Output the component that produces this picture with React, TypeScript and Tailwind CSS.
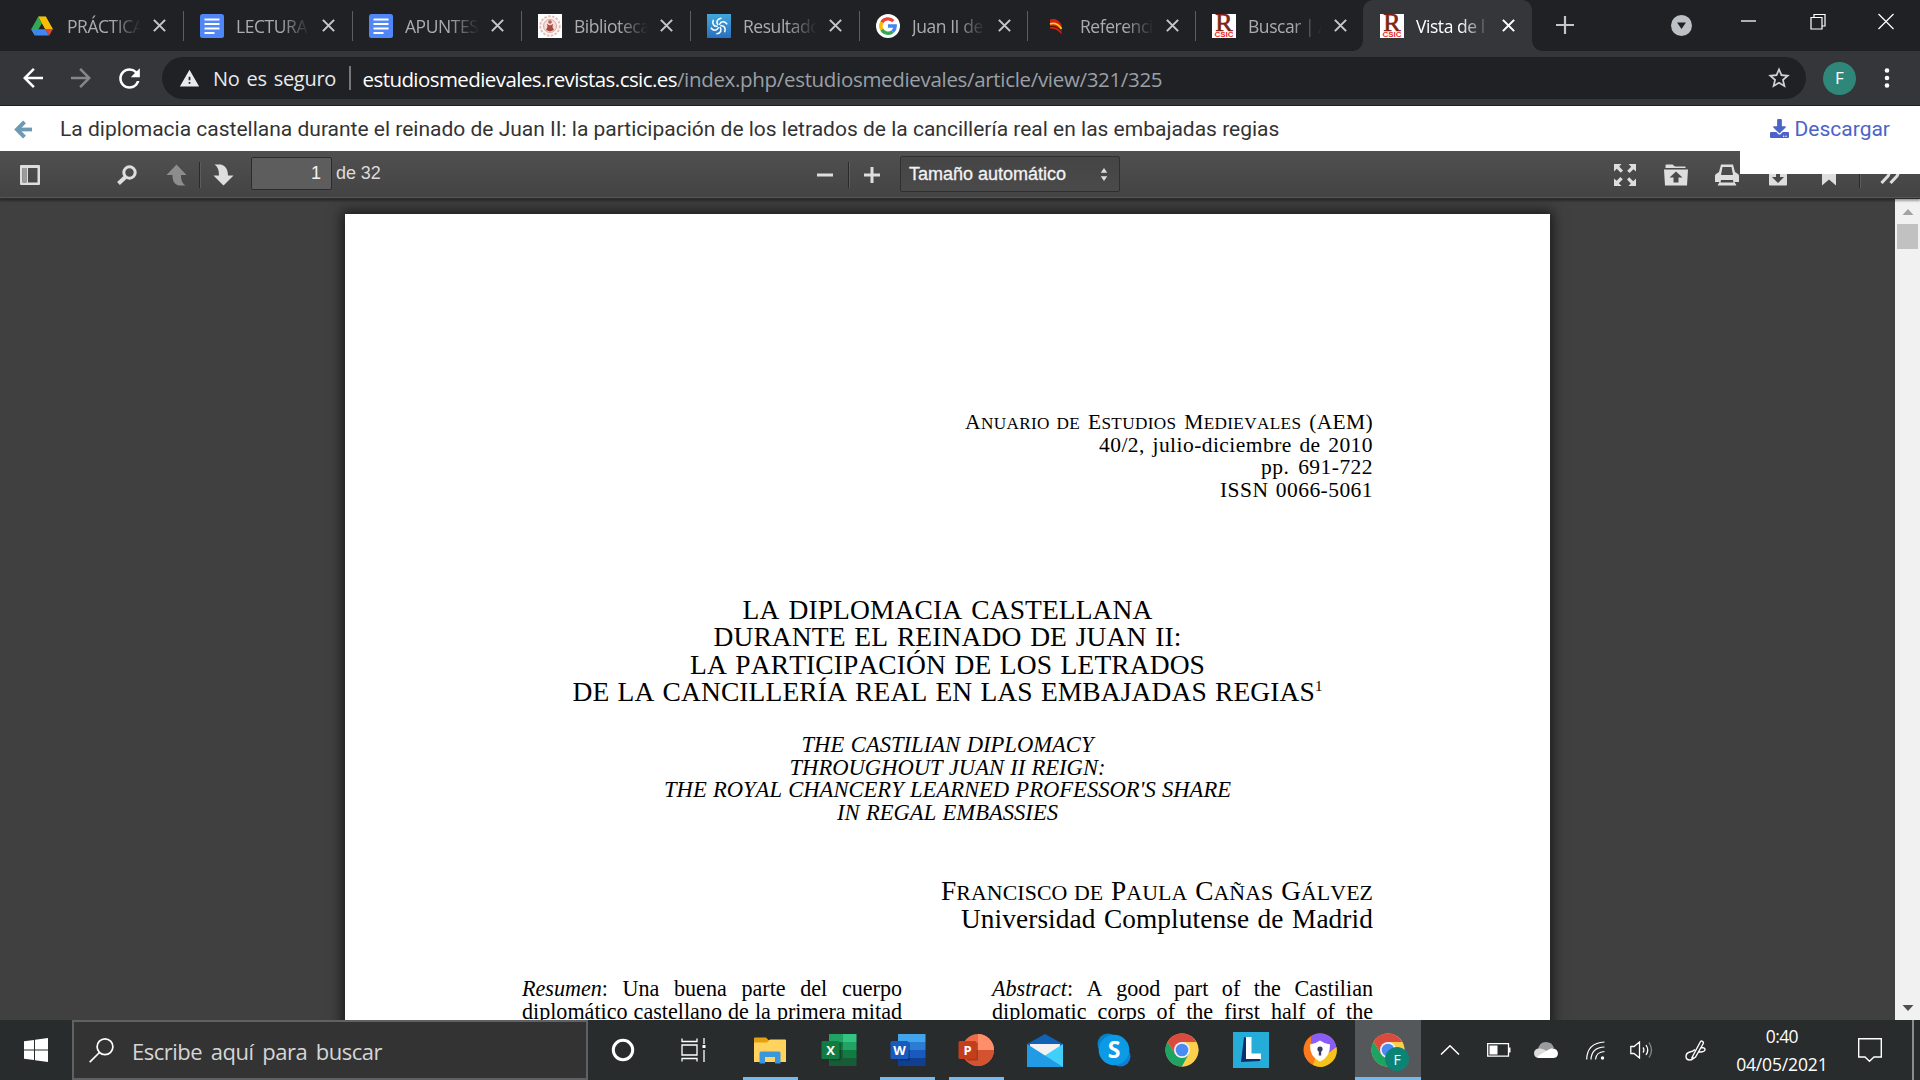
import React from "react";
import { MdArrowBack, MdArrowForward, MdRefresh, MdStarBorder, MdWarning } from "react-icons/md";
import { FaDownload } from "react-icons/fa";

type P = { children?: React.ReactNode };

/* ---------- favicons ---------- */
const Drive = () => (
  <svg viewBox="0 0 22 20" className="mr-[2px] h-5 w-[22px]">
    <path d="M7.3 0.5 H14.7 L11 7.2Z" fill="#188038" />
    <path d="M7.3 0.5 L11 7.2 L3.8 19.5 L0.2 13.2Z" fill="#34a853" />
    <path d="M14.7 0.5 L21.8 13.2 H14.4 L11 7.2Z" fill="#fbbc04" />
    <path d="M7.3 0.5H14.7L21.800 13.200H14.400L11 7.200Z" fill="#fbbc04" />
    <path d="M7.5 13.2 H14.4 L18.2 19.5 H3.8Z" fill="#4285f4" />
    <path d="M14.4 13.2 H21.8 L18.2 19.5Z" fill="#ea4335" />
    <path d="M0.2 13.2 H7.5 L3.8 19.5Z" fill="#4285f4" />
  </svg>
);
const Docs = () => (
  <svg viewBox="0 0 24 24" className="size-6">
    <rect width="24" height="24" rx="2.5" fill="#5087f8" />
    <path d="M4.5 5.5h15M4.5 10h15M4.5 14.5h15M4.5 19h10" stroke="#fff" strokeWidth="2.1" />
  </svg>
);
const Seal = () => (
  <svg viewBox="0 0 24 24" className="size-6">
    <rect width="24" height="24" fill="#fff" />
    <circle cx="12" cy="12" r="9.8" fill="#fbf1ee" stroke="#e3bbb4" strokeWidth="1.800" strokeDasharray="2.500 1.500" />
    <circle cx="12" cy="12" r="6.5" fill="#f3dcd8" stroke="#dbaaa2" />
    <path d="M9 10l3 1.500 3-1.500-.5 3 1.500 3-4 1.500-4-1.500 1.500-3z" fill="#a8453d" />
    <circle cx="12" cy="8" r="1.8" fill="#b8605a" />
  </svg>
);
const Swirl = () => (
  <svg viewBox="0 0 24 24" className="size-6">
    <defs>
      <linearGradient id="sw" x1="0" y1="0" x2="0" y2="1">
        <stop offset="0" stopColor="#41a8dc" />
        <stop offset="1" stopColor="#2a6fc0" />
      </linearGradient>
    </defs>
    <rect width="24" height="24" fill="url(#sw)" />
    <g fill="none" stroke="#fff" strokeWidth="1.500" strokeLinecap="round">
      {[0, 60, 120, 180, 240, 300].map((a) => (
        <path key={a} d="M10.800 10.500C9 8 10.200 4.800 14 4.200" transform={`rotate(${a} 12 12)`} />
      ))}
    </g>
  </svg>
);
const Google = () => (
  <svg viewBox="0 0 24 24" className="size-6">
    <circle cx="12" cy="12" r="12" fill="#fff" />
    <g fill="none" strokeWidth="3.4">
      <path d="M17.3 7.2A7.2 7.2 0 0 0 5.8 8.4" stroke="#ea4335" />
      <path d="M5.8 8.4a7.2 7.2 0 0 0 0 7.2" stroke="#fbbc05" />
      <path d="M5.8 15.6A7.2 7.2 0 0 0 16.8 17.4" stroke="#34a853" />
      <path d="M16.8 17.4A7.2 7.2 0 0 0 19.2 12H12" stroke="#4285f4" />
    </g>
  </svg>
);
const Flag = () => (
  <svg viewBox="0 0 24 24" className="size-6">
    <path d="M6 5.500Q13 3 17.500 10.500v10Q13 14 6 14.500z" fill="#d51f10" />
    <path d="M6 9.800q7-2 11.500 5" fill="none" stroke="#ffd21c" strokeWidth="1.800" />
    <path d="M6 12.500q7-1 11.500 5" fill="none" stroke="#3c0f0a" strokeWidth="1" />
  </svg>
);
const Csic = () => (
  <span className="flex h-6 w-6 flex-col items-center overflow-hidden bg-white">
    <span className="h-[18px] font-['Liberation_Serif',serif] text-[26px] leading-[18px] text-[#7e2415] [-webkit-text-stroke:0.600px]">R</span>
    <span className="h-[6px] font-['Liberation_Sans',sans-serif] text-[8px] leading-[6px] font-bold text-[#ee2d1d]">CSIC</span>
  </span>
);

const tabs = [
  { t: "PRÁCTICA", icon: <Drive /> },
  { t: "LECTURA", icon: <Docs /> },
  { t: "APUNTES", icon: <Docs /> },
  { t: "Biblioteca", icon: <Seal /> },
  { t: "Resultado", icon: <Swirl /> },
  { t: "Juan II de", icon: <Google /> },
  { t: "Referencia", icon: <Flag /> },
  { t: "Buscar | A", icon: <Csic /> },
  { t: "Vista de l", icon: <Csic />, active: true },
];

function TabStrip() {
  return (
    <div className="flex h-[51px] items-stretch bg-[#202124] pl-[14px]">
      {tabs.map((tab, i) => (
        <div
          key={i}
          className={
            "relative flex shrink-0 items-center pl-[17px] " +
            (i < 5 || tab.active ? "w-[169px] " : "w-[168px] ") +
            (tab.active ? "rounded-t-[10px] bg-[#35363a] text-white" : "text-[#a9adb2]")
          }
        >
          {tab.active && (
            <>
              <span className="absolute bottom-0 -left-[10px] size-[10px] bg-[radial-gradient(circle_at_0_0,#202124_9.500px,#35363a_10px)]" />
              <span className="absolute -right-[10px] bottom-0 size-[10px] bg-[radial-gradient(circle_at_100%_0,#202124_9.500px,#35363a_10px)]" />
            </>
          )}
          <span className="flex w-6 justify-center">{tab.icon}</span>
          <span className="ml-3 w-[74px] overflow-hidden text-[17.500px] leading-6 tracking-[-0.450px] whitespace-nowrap [mask-image:linear-gradient(to_right,#000_60%,transparent)]">
            {tab.t}
          </span>
          <svg viewBox="0 0 12 12" className={"ml-[12px] size-[13px] shrink-0 " + (tab.active ? "text-white" : "text-[#c3c6ca]")}>
            <path d="M0.800 0.800 11.200 11.200M11.200 0.800 0.800 11.200" stroke="currentColor" strokeWidth="1.900" />
          </svg>
          {i < 7 && <span className="absolute top-[11px] -right-px h-[30px] w-[1.500px] bg-[#5b5d60]" />}
        </div>
      ))}
      <svg viewBox="0 0 18 18" className="mt-4 ml-[24px] size-[18px]">
        <path d="M9 0v18M0 9h18" stroke="#c3c6ca" strokeWidth="2.200" />
      </svg>
      <svg viewBox="0 0 21 21" className="mt-[14.500px] ml-[97px] size-[21px]">
        <circle cx="10.500" cy="10.500" r="10.500" fill="#bdc1c6" />
        <path d="M6 7.500h9l-4.500 6.500z" fill="#202124" />
      </svg>
      <div className="mt-[13px] ml-[49px] flex h-[17px] w-[153px] items-center justify-between">
        <svg viewBox="0 0 16 17" className="h-[17px] w-4"><path d="M0 8h15" stroke="#fff" strokeWidth="1.300" /></svg>
        <svg viewBox="0 0 16 17" className="h-[17px] w-4" fill="none" stroke="#fff" strokeWidth="1.200">
          <path d="M1 4.500h11v11.500H1zM4 4.500v-3h11v11.500h-3" />
        </svg>
        <svg viewBox="0 0 16 17" className="h-[17px] w-4" stroke="#fff" strokeWidth="1.200">
          <path d="M0.500 1l15 15M15.500 1l-15 15" />
        </svg>
      </div>
    </div>
  );
}

function AddressRow() {
  return (
    <div className="flex h-[55px] items-center border-b border-[#202124] bg-[#35363a]">
      <MdArrowBack className="ml-[18px] size-[30px] text-white" />
      <MdArrowForward className="ml-[18px] size-[30px] text-[#85878b]" />
      <MdRefresh className="ml-[18px] size-[31px] text-white" />
      <div className="ml-[17px] flex h-[42px] w-[1644px] items-center rounded-full bg-[#202124]">
        <MdWarning className="ml-[17px] size-[21px] text-[#e8eaed]" />
        <span className="mt-px ml-[13px] w-[123px] text-[20px] leading-7 tracking-[-0.300px] whitespace-nowrap text-[#e8eaed] [text-align-last:justify]">No es seguro</span>
        <span className="ml-[13px] h-6 w-[1.500px] bg-[#75777a]" />
        <span className="mt-px ml-[12px] text-[20.500px] leading-7 whitespace-nowrap">
          <span className="tracking-[-0.570px] text-white">estudiosmedievales.revistas.csic.es</span>
          <span className="tracking-[-0.320px] text-[#9aa0a6]">/index.php/estudiosmedievales/article/view/321/325</span>
        </span>
        <MdStarBorder className="mr-[14px] ml-auto size-[26px] text-[#d0d2d5]" />
      </div>
      <span className="ml-[17px] flex size-[33px] items-center justify-center rounded-full bg-[#2f877a] text-[17px] text-white">F</span>
      <svg viewBox="0 0 6 20" className="ml-[28px] h-5 w-[6px] shrink-0" fill="#fff">
        <circle cx="3" cy="2.500" r="2.300" /><circle cx="3" cy="10" r="2.300" /><circle cx="3" cy="17.500" r="2.300" />
      </svg>
    </div>
  );
}

/* ---------- pdf viewer toolbar ---------- */
const Sep = () => <span className="h-[26px] w-[2px] border-l border-l-[#2a2a2a] bg-[#5c5c5c]" />;

function PdfToolbar() {
  return (
    <div className="relative z-10 flex h-12 items-center border-b border-[#2c2c2c] bg-linear-to-b from-[#505050] to-[#434343] font-['Liberation_Sans',sans-serif] text-[#dcdcdc] shadow-[0_2px_2px_rgba(0,0,0,0.350),inset_0_-1px_0_#565656]">
      <svg viewBox="0 0 22 22" className="ml-[19px] size-[22px]">
        <path fillRule="evenodd" d="M2 1h18q1 0 1 1v18q0 1-1 1H2q-1 0-1-1V2q0-1 1-1zM3.500 4v14.500h4V4zM9 4v14.500h9.500V4z" fill="#dedede" />
        <path d="M4 4h3.500v14.500H4z" fill="#9c9c9c" />
      </svg>
      <svg viewBox="0 0 21 20" className="ml-[76px] h-5 w-[21px]" fill="none" stroke="#dedede">
        <circle cx="12.500" cy="7.500" r="5.700" strokeWidth="3" />
        <path d="M8.500 12L1.500 18.500" strokeWidth="4" />
      </svg>
      <svg viewBox="0 0 21 22" className="ml-[28px] h-[22px] w-[21px]">
        <path d="M10.500 0.500L20.500 11H15C15 16 16 19 19.500 21.500H12.500C8 20 6.500 17 6.500 11H0.500Z" fill="#8d8d8d" />
      </svg>
      <span className="ml-[12px] flex"><Sep /></span>
      <svg viewBox="0 0 21 22" className="ml-[12px] h-[22px] w-[21px]">
        <path d="M10.500 21.500L20.500 11.500H15C15 6 13 2 8 0.500H1.500C5 3 6 6 6 11.500H0.500Z" fill="#dedede" />
      </svg>
      <span className="mb-[3px] ml-[17px] flex h-[33px] w-[81px] items-center justify-end rounded-[2px] border border-[#2b2b2b] bg-[#5d5d5d] pr-[10px] text-[18px] text-[#f2f2f2]">1</span>
      <span className="mb-[3px] ml-[4px] w-[46px] text-[18px] tracking-[-0.100px] whitespace-nowrap">de 32</span>
      <svg viewBox="0 0 16 16" className="ml-[435px] size-4"><path d="M0 8h16" stroke="#dedede" strokeWidth="3" /></svg>
      <span className="ml-[15px] flex"><Sep /></span>
      <svg viewBox="0 0 16 16" className="ml-[14px] size-4"><path d="M0 8h16M8 0v16" stroke="#dedede" strokeWidth="3" /></svg>
      <span className="mb-[1px] ml-[20px] flex h-9 w-[220px] items-center rounded-[2px] border border-[#2f2f2f] bg-linear-to-b from-[#454545] to-[#4a4a4a] pl-[8px] text-[18px] text-[#f2f2f2]">
        <span className="w-[157px] whitespace-nowrap [-webkit-text-stroke:0.300px] [text-align-last:justify]">Tamaño automático</span>
        <svg viewBox="0 0 8 14" className="ml-[34px] h-[13px] w-2" fill="#dedede"><path d="M4 0l3.500 5h-7zM4 14l3.500-5h-7z" /></svg>
      </span>
      <svg viewBox="0 0 22 22" className="ml-[494px] size-[22px]" fill="#dedede">
        {[0, 90, 180, 270].map((a) => (
          <path key={a} d="M0 0h7.500L5.200 2.600 9 6.400 6.800 8.800 2.800 4.800 0 7.500z" transform={`rotate(${a} 11 11)`} />
        ))}
      </svg>
      <svg viewBox="0 0 24 22" className="ml-[28px] h-[22px] w-6">
        <path d="M1.500 4V1.500q0-1 1-1h6l2.500 2h10.500v1.500z" fill="#dedede" />
        <path fillRule="evenodd" d="M0 5.500h24L23 21.500H1zM12 7.500l-6.500 6h4v5h5v-5h4z" fill="#dedede" />
      </svg>
      <svg viewBox="0 0 24 22" className="ml-[27px] h-[22px] w-6">
        <path fillRule="evenodd" d="M6 0.500h12l2 7.500 3 2q1 .5 1 2v6h-4.500l2 3.500H2.500l2-3.500H0v-6q0-1.500 1-2l3-2zM7.500 3L6 11h12L16.500 3zM6 16l-.5 2.500h13L18 16z" fill="#dedede" />
      </svg>
      <svg viewBox="0 0 18 22" className="ml-[30px] h-[22px] w-[18px]">
        <path fillRule="evenodd" d="M1 1h16q1 0 1 1v18.500q0 1-1 1H1q-1 0-1-1V2q0-1 1-1zM7 5v8H3l6 6 6-6h-4V5z" fill="#dedede" />
      </svg>
      <svg viewBox="0 0 14 22" className="ml-[35px] h-[22px] w-[14px]"><path d="M0 1h14v20.500l-7-6-7 6z" fill="#dedede" /></svg>
      <span className="ml-[23px] flex"><Sep /></span>
      <svg viewBox="0 0 22 18" className="ml-[19px] h-[18px] w-[22px]" fill="none" stroke="#dedede" strokeWidth="3">
        <path d="M6 0Q11 6 8 10L1.500 17M14 0Q20 6 17 10L10.500 17" />
      </svg>
      <span className="absolute top-0 right-0 h-[23px] w-[180px] bg-white" />
    </div>
  );
}

/* ---------- document ---------- */
const J = ({ children, className = "" }: P & { className?: string }) => (
  <div className={"whitespace-nowrap [text-align-last:justify] " + className}>{children}</div>
);
const Sc = ({ children }: P) => <span className="text-[0.800em] leading-none">{children}</span>;

function Document() {
  return (
    <div className="ml-[345px] h-[1200px] w-[1205px] bg-white pt-[197px] font-['Liberation_Serif',serif] text-black shadow-[0_0_12px_3px_rgba(0,0,0,0.600)] [font-kerning:none]">
      <div className="mr-[177px] flex flex-col items-end text-[21.500px] leading-[22.600px] tracking-[0.450px]">
        <J className="w-[408px] tracking-[0.350px]">A<Sc>NUARIO DE</Sc> E<Sc>STUDIOS</Sc> M<Sc>EDIEVALES</Sc> (AEM)</J>
        <J className="w-[274px]">40/2, julio-diciembre de 2010</J>
        <J className="w-[112px]">pp. 691-722</J>
        <J className="w-[153px]">ISSN 0066-5061</J>
      </div>
      <div className="mt-[94.600px] flex flex-col items-center text-[27.500px] leading-[27.300px] tracking-[0.100px]">
        <J className="w-[410px]">LA DIPLOMACIA CASTELLANA</J>
        <J className="w-[468px]">DURANTE EL REINADO DE JUAN II:</J>
        <J className="w-[515px]">LA PARTICIPACIÓN DE LOS LETRADOS</J>
        <J className="w-[750px]">DE LA CANCILLERÍA REAL EN LAS EMBAJADAS REGIAS<span className="relative -top-[10px] text-[15px] leading-none">1</span></J>
      </div>
      <div className="mt-[29px] flex flex-col items-center text-[22.600px] leading-[22.500px] italic">
        <J className="w-[292px]">THE CASTILIAN DIPLOMACY</J>
        <J className="w-[316px]">THROUGHOUT JUAN II REIGN:</J>
        <J className="w-[567px]">THE ROYAL CHANCERY LEARNED PROFESSOR'S SHARE</J>
        <J className="w-[221px]">IN REGAL EMBASSIES</J>
      </div>
      <div className="mt-[54px] mr-[177px] flex flex-col items-end text-[27.300px] leading-[27.800px] tracking-[0.100px]">
        <J className="w-[432px]">F<Sc>RANCISCO DE</Sc> P<Sc>AULA</Sc> C<Sc>AÑAS</Sc> G<Sc>ÁLVEZ</Sc></J>
        <J className="w-[412px]">Universidad Complutense de Madrid</J>
      </div>
      <div className="mt-[44.400px] mr-[177px] ml-[177px] flex justify-between text-[22.100px] leading-[22.600px]">
        <div className="w-[380px]">
          <J><i>Resumen</i>: Una buena parte del cuerpo</J>
          <J>diplomático castellano de la primera mitad</J>
        </div>
        <div className="w-[381px]">
          <J><i>Abstract</i>: A good part of the Castilian</J>
          <J>diplomatic corps of the first half of the</J>
        </div>
      </div>
    </div>
  );
}

function Viewer() {
  return (
    <div className="flex h-[821px] overflow-hidden bg-[#404040]">
      <div className="w-[1895px] overflow-hidden pt-[15px]"><Document /></div>
      <div className="flex w-[25px] flex-col items-center bg-[#f1f1f1]">
        <svg viewBox="0 0 12 6" className="mt-[10px] h-[6px] w-3"><path d="M6 0l5.500 6h-11z" fill="#a3a3a3" /></svg>
        <span className="mt-[9px] h-[25px] w-[21px] bg-[#c1c1c1]" />
        <svg viewBox="0 0 12 6" className="mt-auto mb-[9px] h-[6px] w-3"><path d="M6 6L.5 0h11z" fill="#505050" /></svg>
      </div>
    </div>
  );
}

/* ---------- taskbar ---------- */
const Office = ({ l, kind }: { l: string; kind: "x" | "w" | "p" }) => {
  const c = { x: ["#33c481", "#21a366", "#107c41", "#185c37"], w: ["#41a5ee", "#2b7cd3", "#185abd", "#103f91"], p: [] as string[] }[kind];
  const box = { x: "#107c41", w: "#185abd", p: "#c43e1c" }[kind];
  return (
    <svg viewBox="0 0 36 32" className="h-8 w-9">
      {kind === "p" ? (
        <>
          <circle cx="20" cy="16" r="16" fill="#ed6c47" />
          <path d="M20 0a16 16 0 0 1 16 16H20z" fill="#ff8f6b" />
          <path d="M4 16h32a16 16 0 0 1-32 0z" fill="#d35230" />
        </>
      ) : (
        <>
          {c.map((f, i) => <rect key={i} x="8" y={i * 8} width="27.500" height="8.200" fill={f} />)}
          {kind === "x" && <><rect x="8" y="0" width="14" height="8" fill="#21a366" /><rect x="8" y="8" width="14" height="8" fill="#107c41" /><rect x="8" y="16" width="14" height="8" fill="#185c37" /></>}
        </>
      )}
      <rect x="9" y="8.500" width="11" height="18" rx="1" fill="#000" opacity=".25" />
      <rect x="0.500" y="7" width="18" height="18" rx="1.600" fill={box} />
      <text x="9.500" y="20.500" textAnchor="middle" fill="#fff" fontSize="13" fontWeight="700" fontFamily="Open Sans">{l}</text>
    </svg>
  );
};

const Chrome = () => (
  <svg viewBox="0 0 34 34" className="size-[34px]">
    <circle cx="17" cy="17" r="16.500" fill="#fcd04b" />
    <path d="M2.700 8.700A16.500 16.500 0 0 0 17 33.500l7-12.500-7-4-7 4z" fill="#1da362" />
    <path d="M17 9h14.300A16.500 16.500 0 0 1 17 33.500l7-12.500z" fill="#fcd04b" />
    <path d="M2.700 8.700L10 21l7-12h14.300A16.500 16.500 0 0 0 2.700 8.700z" fill="#db4a3f" />
    <circle cx="17" cy="17" r="8" fill="#f1f1f1" />
    <circle cx="17" cy="17" r="6.300" fill="#4a8af4" />
  </svg>
);

const Slot = ({ children, open, active }: P & { open?: boolean; active?: boolean }) => (
  <div className="relative flex h-full w-[68.700px] shrink-0 items-center justify-center">
    {active && <span className="absolute inset-y-0 right-[2px] left-px bg-[#54585a]" />}
    <span className="relative flex">{children}</span>
    {open && <span className={"absolute bottom-0 h-[3px] bg-[#76b9ed] " + (active ? "right-[2px] left-px" : "inset-x-[7px]")} />}
  </div>
);

function Taskbar() {
  return (
    <div className="flex h-[60px] items-center bg-[#282c2d]">
      <svg viewBox="0 0 24 24" className="ml-6 size-6" fill="#fff">
        <path d="M0 3.300L10 2v9.500H0zM11 1.800L24 0v11.500H11zM0 12.500h10V22L0 20.700zM11 12.500h13V24L11 22.200z" />
      </svg>
      <div className="ml-6 flex h-[60px] w-[516px] items-center border-2 border-[#606162] bg-[#333333]">
        <svg viewBox="0 0 25 25" className="ml-[15px] size-[25px]" fill="none" stroke="#fff" strokeWidth="1.700">
          <circle cx="16" cy="8.800" r="7.900" /><path d="M10.500 14.500L.7 24.200" />
        </svg>
        <span className="mt-[3px] ml-[18px] w-[250px] text-[22px] tracking-[-0.500px] whitespace-nowrap text-[#d5d6d7] [text-align-last:justify]">Escribe aquí para buscar</span>
      </div>
      <div className="ml-[1px] flex h-full">
        <Slot><svg viewBox="0 0 24 24" className="size-6"><circle cx="12" cy="12" r="9.700" fill="none" stroke="#fff" strokeWidth="3" /></svg></Slot>
        <div className="mr-[7.600px] ml-[2px] flex">
          <Slot>
            <svg viewBox="0 0 26 24" className="h-6 w-[26px]" fill="none" stroke="#fff" strokeWidth="1.300">
              <path d="M1 .5V3.500h15V.5M1 23.500v-3h15v3M1 7h15v10H1zM23 0v6M23 12v12" /><path d="M21.500 7h3v3h-3z" fill="#fff" stroke="none" />
            </svg>
          </Slot>
        </div>
        <Slot open>
          <svg viewBox="0 0 32 27" className="h-[27px] w-8">
            <path d="M0 1.500q0-1 1-1h11l2.500 2.500H31q1 0 1 1v5H0z" fill="#e3a112" />
            <path d="M0 5.500h13l3-3H31q1 0 1 1V25H0z" fill="#ffd35e" />
            <path d="M5.500 26.500V16q0-1.500 1.500-1.500h18q1.500 0 1.500 1.500v10.500H21v-6.500H11v6.500z" fill="#3a96dd" />
          </svg>
        </Slot>
        <Slot><Office l="X" kind="x" /></Slot>
        <Slot open><Office l="W" kind="w" /></Slot>
        <Slot open><Office l="P" kind="p" /></Slot>
        <Slot>
          <svg viewBox="0 0 36 33" className="h-[33px] w-9">
            <path d="M0 10L18 0l18 10v8H0z" fill="#0f62b5" />
            <path d="M3 10h30l-1 10-14 6L3 18z" fill="#f2f2f2" />
            <path d="M36 10v23H0l18-11.500z" fill="#3fd0fb" />
            <path d="M0 10l18 11.500L36 33H0z" fill="#229be5" />
          </svg>
        </Slot>
        <Slot>
          <svg viewBox="0 0 34 34" className="size-[34px]">
            <circle cx="11" cy="11" r="10.500" fill="#0a7fc4" /><circle cx="23.500" cy="23.500" r="10" fill="#0a7fd4" />
            <circle cx="17" cy="17" r="15.300" fill="#0a9ae6" />
            <text x="17" y="25" textAnchor="middle" fill="#fff" fontSize="23" fontWeight="700" fontFamily="Open Sans">S</text>
          </svg>
        </Slot>
        <Slot><Chrome /></Slot>
        <Slot>
          <svg viewBox="0 0 36 36" className="size-9">
            <rect width="36" height="36" fill="#25acd9" />
            <path d="M11 5l3 1v20h13v3L8 30z" fill="#08306b" />
            <path d="M13 5h5.500v16.500H28V27H13z" fill="#fff" />
          </svg>
        </Slot>
        <Slot>
          <svg viewBox="0 0 34 34" className="size-[34px]">
            <circle cx="17" cy="17" r="16.500" fill="#ff7a1a" />
            <path d="M8 3A16.500 16.500 0 0 1 33.500 17L27 19 8 10z" fill="#8b5cf6" />
            <path d="M33.500 14A16.500 16.500 0 0 1 10 32l2-6 15-7z" fill="#f5c21c" />
            <path d="M7 11.500Q13 10.500 17 7.500q4 3 10 4Q27.500 24 17 28.500 6.500 24 7 11.500z" fill="#fff" />
            <circle cx="17" cy="16" r="2.600" fill="#373a63" /><path d="M15.800 16h2.400v6.500h-2.400z" fill="#373a63" />
          </svg>
        </Slot>
        <Slot open active>
          <span className="relative mr-[1px] flex">
            <Chrome />
            <span className="absolute -right-[4px] -bottom-[4px] flex size-6 items-center justify-center rounded-full bg-[#0c8475] text-[14px] text-white">F</span>
          </span>
        </Slot>
      </div>
      <svg viewBox="0 0 20 10" className="ml-[17px] h-[10px] w-5" fill="none" stroke="#fff" strokeWidth="1.500"><path d="M1 9.500L10 .8l9 8.700" /></svg>
      <svg viewBox="0 0 24 14" className="ml-[27px] h-[14px] w-6"><path d="M.7.700h20.800v12.500H.7z" fill="none" stroke="#fff" strokeWidth="1.300" /><path d="M2.500 2.500h8v9h-8zM22 4.500h1.500v5H22z" fill="#fff" /></svg>
      <svg viewBox="0 0 24 16" className="ml-[23px] h-4 w-6">
        <path d="M4 8Q5 0 12 0q6 0 8 6l-8 6z" fill="#9a9c9d" />
        <path d="M4.500 16Q0 15.500 0 11q.5-4.500 5-4.500 3-.5 6 1.500l9 7z" fill="#dcdcdc" />
        <path d="M3 15q8-6 14-8.500 6.500-.5 7 5Q23.500 16 19 16H5z" fill="#fff" />
      </svg>
      <svg viewBox="0 0 19 19" className="ml-[28px] size-[19px]" fill="none" stroke="#fff" strokeWidth="1.200">
        <path d="M.7 18.500Q1 2 18.500 1M5 18.500Q5.500 6.500 18.500 6M9.500 18.500Q10 11 18.500 10.500" />
        <circle cx="16.500" cy="17" r="1.700" fill="#fff" stroke="none" />
      </svg>
      <svg viewBox="0 0 24 18" className="ml-[25px] h-[18px] w-6" fill="none" stroke="#fff" strokeWidth="1.300">
        <path d="M.8 5.500H4L9.500 1v16L4 12.500H.8zM13 6.500q1.800 2.500 0 5M16 4q3.500 5 0 10" /><path d="M19 1.500q5 7.500 0 15" stroke="#85888a" />
      </svg>
      <svg viewBox="0 0 21 21" className="ml-[31px] size-[21px]" fill="none" stroke="#fff" strokeWidth="1.400">
        <path d="M7 17.500L15 2.500q1-2 2.500-1.200T18 4L10.500 17 7 19.500zM10 9.500q-2 2-5 2.500Q1 13 1 16.500T5 20q4-.5 2.500-4M16 7.500q4 0 4 2T16 12h-2" />
      </svg>
      <div className="ml-[25px] flex w-[102px] flex-col items-center text-[17.500px] leading-[28px] tracking-[-0.150px] text-white">
        <span className="tracking-[-0.600px]">0:40</span>
        <span>04/05/2021</span>
      </div>
      <svg viewBox="0 0 24 24" className="ml-[25px] size-6" fill="none" stroke="#fff" strokeWidth="1.400">
        <path d="M.7.700h22.600v18.300H16l-4.500 4.300L7 19H.7z" />
      </svg>
      <span className="ml-[30px] h-full w-[2px] bg-[#8a8c8d]" />
    </div>
  );
}

export default function App() {
  return (
    <div className="flex h-[1080px] w-[1920px] flex-col overflow-hidden bg-[#202124] font-['Open_Sans',sans-serif]">
      <TabStrip />
      <AddressRow />
      <div className="flex h-[45px] items-center bg-white font-['Roboto',sans-serif] text-[21px]">
        <svg viewBox="0 0 18 19" className="mt-px ml-[14px] h-[19px] w-[18px]" fill="none" stroke="#6c9ab5">
          <path d="M10.500 1.800L3 9.500l7.500 7.700" strokeWidth="4" /><path d="M3 9.500h15" strokeWidth="3.800" />
        </svg>
        <span className="mt-[2px] ml-[28px] w-[1217px] whitespace-nowrap text-[#333333] [text-align-last:justify]">
          La diplomacia castellana durante el reinado de Juan II: la participación de los letrados de la cancillería real en las embajadas regias
        </span>
        <span className="mt-[2px] mr-[30px] ml-auto flex items-center gap-[6px] text-[#4b63c9]">
          <FaDownload className="mb-[3px] size-[19px]" />Descargar
        </span>
      </div>
      <PdfToolbar />
      <Viewer />
      <Taskbar />
    </div>
  );
}
